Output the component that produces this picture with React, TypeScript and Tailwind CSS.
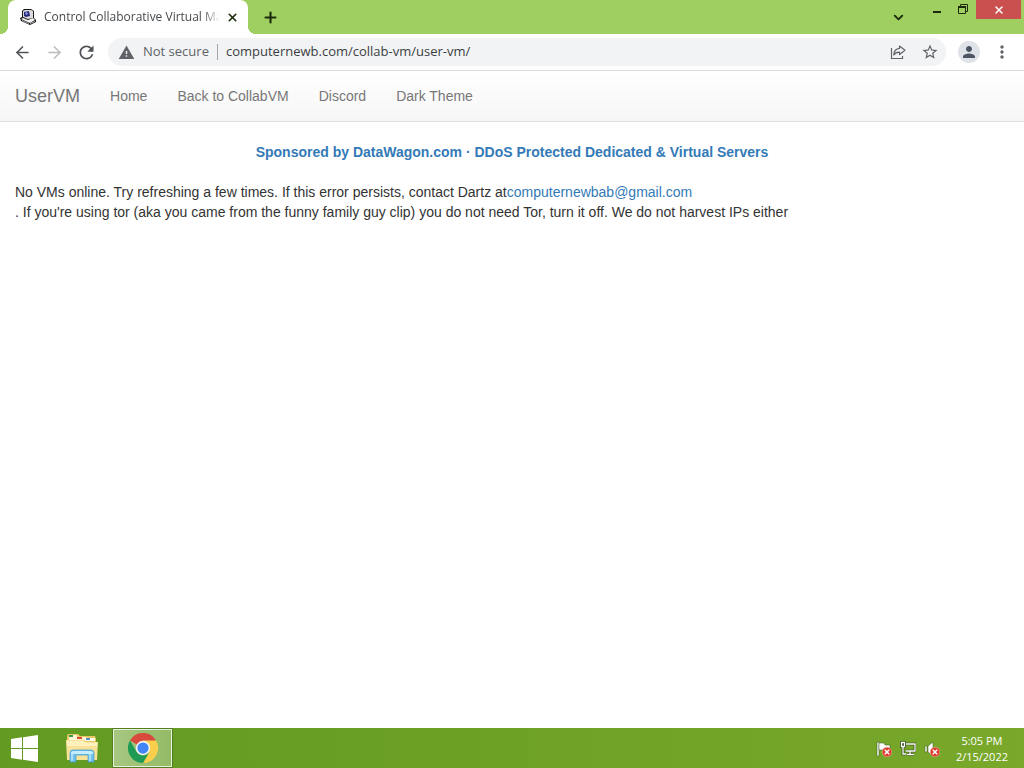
import { ArrowLeft, ArrowRight, X, Plus, ChevronDown } from "lucide-react";
import { MdRefresh, MdWarning, MdMoreVert, MdPerson, MdStarBorder } from "react-icons/md";

const navLinks = ["Home", "Back to CollabVM", "Discord", "Dark Theme"];

function ComputerIcon() {
  return (
    <svg viewBox="0 0 16 16" className="size-4 shrink-0" aria-hidden="true">
      <path d="M2 2 4 0h7l3 2v7l2 2v2l-6 3-9-4-1-3 2-1Z" fill="#161616" />
      <path d="m3 2 2-1h6l2 1v7l-5 1-5-2Z" fill="#dcdcdc" />
      <path d="m4 3 5-1 1 5-4 1-2-1Z" fill="#252a78" />
      <path d="m5 4 2-1 1 2-2 1Z" fill="#8f9bdc" />
      <path d="m1 10 2-1 5 2 5-2 2 2-5 3Z" fill="#f2f2f2" />
      <path d="m2 11 7 3v1l-7-3Zm8 3 5-2v1l-5 2Z" fill="#a9a9a9" />
    </svg>
  );
}

function ShareIcon() {
  return (
    <svg viewBox="0 0 16 16" className="size-4" fill="none" stroke="currentColor" strokeWidth="1.2" aria-hidden="true">
      <path d="M1.500 4v10.500h11V12" />
      <path d="M9.500 2 15 6.300 9.500 10.500V8.200C7 8.200 5 9 3.800 11c.2-4 2.200-6.300 5.700-6.600Z" strokeLinejoin="round" />
    </svg>
  );
}

function RestoreIcon() {
  return (
    <svg viewBox="0 0 10 10" className="size-2.5" fill="none" stroke="currentColor" aria-hidden="true">
      <path d="M2.500 2V.5h7v7H8" />
      <path d="M.5 3h7v6.500h-7Z" />
      <path d="M0 3h8" strokeWidth="2" />
    </svg>
  );
}

function WindowsLogo() {
  return (
    <svg viewBox="0 0 27 27" className="size-[27px]" fill="#fff" aria-hidden="true">
      <path d="M0 4 11 2.300V13H0ZM12 2.200 27 0v13H12ZM0 14h11v10.700L0 23ZM12 14h15v13l-15-2.200Z" />
    </svg>
  );
}

function FolderIcon() {
  return (
    <svg viewBox="0 0 32 30" className="h-[30px] w-8" aria-hidden="true">
      <path d="M1 3 2 1h10l2 2h15l1 3v20H1Z" fill="#e9c765" />
      <path d="M3 2h8v5H3Z" fill="#fff7d8" />
      <path d="M3 2h4v2H3Z" fill="#2f9a48" />
      <path d="M10 4h10l2 3H10Z" fill="#fff3cd" />
      <path d="M11 4h5v2h-5Z" fill="#d94b35" />
      <path d="M19 5h10v3H19Z" fill="#fffbe9" />
      <path d="M20 5h4v2h-4Z" fill="#4a8fd0" />
      <path d="M0 7h17l3 2h12l-1 18H1Z" fill="#f8e29a" />
      <path d="M1 8h16l3 2h11v3H1Z" fill="#fff1bd" />
      <path d="M4 29V20q0-3 3-3h18q3 0 3 3v9h-6v-7H10v7Z" fill="#72bfe9" stroke="#3b9bd3" strokeWidth=".7" />
      <path d="M5 19q1-1 3-1h16q2 0 3 1v2H5Z" fill="#c6edfd" />
      <path d="M5 21h2v7H5Zm18 0h2v7h-2Z" fill="#a9e0f8" />
    </svg>
  );
}

function ChromeLogo() {
  return (
    <svg viewBox="0 0 48 48" className="size-[30px]" aria-hidden="true">
      <path d="M24 24 3.200 12A24 24 0 0 1 44.800 12Z" fill="#d84a3c" />
      <path d="M24 12h20.800A24 24 0 0 1 24 48l10.400-18Z" fill="#fbcf4c" />
      <path d="M3.200 12 13.600 30A12 12 0 0 0 34.400 30L24 48A24 24 0 0 1 3.200 12Z" fill="#1e9a55" />
      <circle cx="24" cy="24" r="11.500" fill="#f4f6f2" />
      <circle cx="24" cy="24" r="9" fill="#4285f4" />
    </svg>
  );
}

function ErrorBadge() {
  return (
    <g>
      <circle cx="11" cy="11" r="4.800" fill="#dc3a2b" stroke="#f2b5a5" strokeWidth=".6" />
      <path d="m8.800 8.800 4.400 4.400m0-4.400-4.400 4.400" stroke="#fff" strokeWidth="1.500" />
    </g>
  );
}

function FlagIcon() {
  return (
    <svg viewBox="0 0 16 16" className="size-4" aria-hidden="true">
      <path d="M1 1h2v14H1Z" fill="#fff" stroke="#33521a" strokeWidth=".5" />
      <path d="M3 2h5l1 2h5v6H9L8 9H3Z" fill="#fff" stroke="#33521a" strokeWidth=".5" />
      <ErrorBadge />
    </svg>
  );
}

function NetworkIcon() {
  return (
    <svg viewBox="0 0 16 16" className="size-4" fill="none" aria-hidden="true">
      <path d="M6 3h9v7H6M10 10v3m-3 .5h7M3 6v7h3M1.500 1.500h3v4h-3Z" stroke="#263d13" strokeWidth="2.600" />
      <path d="M6 3h9v7H6M10 10v3m-3 .5h7M3 6v7h3M1.500 1.500h3v4h-3Z" stroke="#fff" strokeWidth="1.300" />
    </svg>
  );
}

function SpeakerIcon() {
  return (
    <svg viewBox="0 0 16 16" className="size-4" aria-hidden="true">
      <path d="M1 5h2v6H1ZM4 5l5-4v14l-5-4Z" fill="#fff" stroke="#33521a" strokeWidth=".5" />
      <ErrorBadge />
    </svg>
  );
}

function TabStrip() {
  return (
    <header className="flex h-[34px] bg-[#9fcf60] pl-2 text-[#1d2b0c]">
      <div className="relative flex w-60 items-center rounded-t-lg bg-white pl-3">
        <span className="absolute bottom-0 -left-2 size-2 bg-[radial-gradient(circle_at_0_0,transparent_8px,#fff_8px)]" />
        <span className="absolute -right-2 bottom-0 size-2 bg-[radial-gradient(circle_at_100%_0,transparent_8px,#fff_8px)]" />
        <ComputerIcon />
        <span className="ml-2 w-[176px] overflow-hidden mask-r-from-90% text-xs whitespace-nowrap text-[#45494d]">
          Control Collaborative Virtual Machines
        </span>
        <button aria-label="Close tab" className="flex size-6 items-center justify-center">
          <X size={13} strokeWidth={3} />
        </button>
      </div>
      <button aria-label="New tab" className="ml-2 flex w-7 items-center justify-center">
        <Plus size={17} strokeWidth={3} />
      </button>
      <div className="ml-auto flex items-start">
        <button aria-label="Search tabs" className="mr-3 flex h-[34px] w-7 items-center justify-center">
          <ChevronDown size={15} strokeWidth={3} />
        </button>
        <button aria-label="Minimize" className="flex h-5 w-[26px] items-center justify-center">
          <span className="mt-1 h-0.5 w-2 bg-current" />
        </button>
        <button aria-label="Restore" className="flex h-[18px] w-[26px] items-center justify-center">
          <RestoreIcon />
        </button>
        <button aria-label="Close window" className="mr-[3px] flex h-[19px] w-[45px] items-center justify-center bg-[#c9504e] text-white">
          <X size={12} strokeWidth={3} />
        </button>
      </div>
    </header>
  );
}

function Toolbar() {
  return (
    <div className="flex h-[37px] items-center border-b border-[#dcdcdc] bg-white px-2 text-[#5f6368]">
      <button aria-label="Back" className="flex size-7 items-center justify-center text-[#4f5357]">
        <ArrowLeft size={19} />
      </button>
      <button aria-label="Forward" className="ml-1 flex size-7 items-center justify-center text-[#babcbe]">
        <ArrowRight size={19} />
      </button>
      <button aria-label="Reload" className="ml-1 flex size-7 items-center justify-center text-[#4f5357]">
        <MdRefresh size={21} />
      </button>
      <div className="ml-2 flex h-7 grow items-center rounded-full bg-[#f1f3f4] pl-2.5 text-[13px]">
        <MdWarning size={17} />
        <label htmlFor="address" className="ml-2">Not secure</label>
        <span className="mx-2 h-4 w-px bg-[#a3a6a9]" />
        <input
          id="address"
          defaultValue="computernewb.com/collab-vm/user-vm/"
          className="min-w-0 grow bg-transparent text-[#3c4043] outline-none"
        />
        <button aria-label="Share" className="flex w-8 justify-center"><ShareIcon /></button>
        <button aria-label="Bookmark" className="flex w-8 justify-center"><MdStarBorder size={18} /></button>
      </div>
      <button aria-label="Profile" className="ml-3 flex size-[22px] items-center justify-center rounded-full bg-[#dfe2e7] text-[#4c5563]">
        <MdPerson size={18} />
      </button>
      <button aria-label="Menu" className="ml-2 flex w-7 justify-center">
        <MdMoreVert size={20} />
      </button>
    </div>
  );
}

export default function App() {
  return (
    <div className="flex min-h-screen flex-col bg-white font-['Open_Sans',sans-serif]">
      <TabStrip />
      <Toolbar />
      <div className="flex grow flex-col font-['Liberation_Sans',sans-serif] text-sm">
        <nav className="flex h-[51px] items-center border-b border-[#e0e0e0] bg-linear-to-b from-white to-[#f6f6f6] px-[15px] text-[#777]">
          <a href="#" className="mr-[15px] text-lg">UserVM</a>
          {navLinks.map((label) => (
            <a key={label} href="#" className="px-[15px]">{label}</a>
          ))}
        </nav>
        <main className="px-[15px] pt-5 leading-5 text-[#333]">
          <p className="text-center font-bold">
            <a href="#" className="text-[#337ab7]">
              Sponsored by DataWagon.com · DDoS Protected Dedicated &amp; Virtual Servers
            </a>
          </p>
          <p className="mt-5">
            No VMs online. Try refreshing a few times. If this error persists, contact Dartz at
            <a href="mailto:computernewbab@gmail.com" className="text-[#337ab7]">computernewbab@gmail.com</a>
            <br />. If you're using tor (aka you came from the funny family guy clip) you do not need Tor, turn it off. We do not harvest IPs either
          </p>
        </main>
      </div>
      <footer className="flex h-10 items-center bg-linear-to-r from-[#629a22] to-[#79a82a] text-white">
        <button aria-label="Start" className="flex w-12 justify-center"><WindowsLogo /></button>
        <button aria-label="File Explorer" className="ml-1 flex w-[60px] justify-center"><FolderIcon /></button>
        <button aria-label="Google Chrome" className="flex h-10 w-[61px] items-center justify-center border border-[#527e22] bg-linear-to-r from-[#a6c780] to-[#94ba66] outline -outline-offset-2 outline-[#e9f1dd]">
          <ChromeLogo />
        </button>
        <div className="ml-auto flex items-center gap-2 pt-0.5">
          <FlagIcon />
          <NetworkIcon />
          <SpeakerIcon />
        </div>
        <div className="mr-4 ml-4 pt-0.5 text-center text-[11px] leading-4">
          <p>5:05 PM</p>
          <p>2/15/2022</p>
        </div>
      </footer>
    </div>
  );
}
